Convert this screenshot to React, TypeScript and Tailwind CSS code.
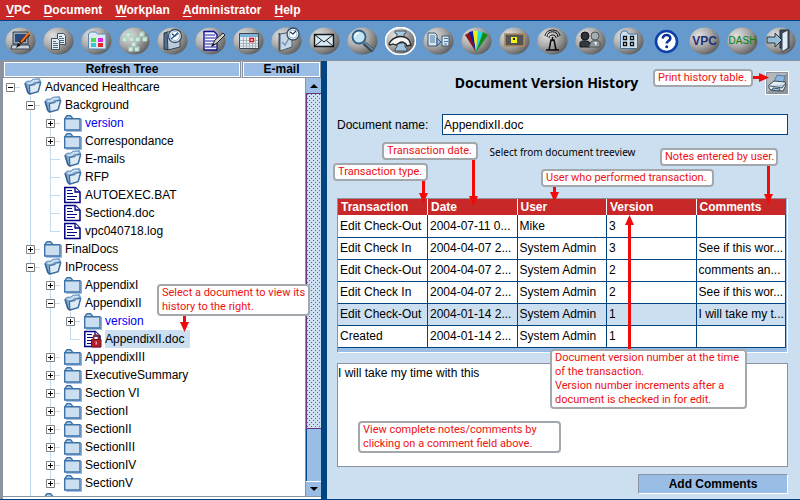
import clsx from 'clsx'
import type { ReactNode } from 'react'

const menus = ['VPC', 'Document', 'Workplan', 'Administrator', 'Help']

type NodeKind = 'open' | 'closed' | 'doc' | 'locked'

type TreeNode = {
  label: string
  depth: number
  kind: NodeKind
  toggle?: 'plus' | 'minus'
  last?: boolean
  link?: boolean
  selected?: boolean
}

const nodes: TreeNode[] = [
  { label: 'Advanced Healthcare', depth: 0, kind: 'open', toggle: 'minus' },
  { label: 'Background', depth: 1, kind: 'open', toggle: 'minus' },
  { label: 'version', depth: 2, kind: 'closed', toggle: 'plus', link: true },
  { label: 'Correspondance', depth: 2, kind: 'closed', toggle: 'plus' },
  { label: 'E-mails', depth: 2, kind: 'open' },
  { label: 'RFP', depth: 2, kind: 'open' },
  { label: 'AUTOEXEC.BAT', depth: 2, kind: 'doc' },
  { label: 'Section4.doc', depth: 2, kind: 'doc' },
  { label: 'vpc040718.log', depth: 2, kind: 'doc', last: true },
  { label: 'FinalDocs', depth: 1, kind: 'closed', toggle: 'plus' },
  { label: 'InProcess', depth: 1, kind: 'open', toggle: 'minus' },
  { label: 'AppendixI', depth: 2, kind: 'closed', toggle: 'plus' },
  { label: 'AppendixII', depth: 2, kind: 'open', toggle: 'minus' },
  { label: 'version', depth: 3, kind: 'closed', toggle: 'plus', link: true },
  { label: 'AppendixII.doc', depth: 3, kind: 'locked', last: true, selected: true },
  { label: 'AppendixIII', depth: 2, kind: 'closed', toggle: 'plus' },
  { label: 'ExecutiveSummary', depth: 2, kind: 'closed', toggle: 'plus' },
  { label: 'Section VI', depth: 2, kind: 'closed', toggle: 'plus' },
  { label: 'SectionI', depth: 2, kind: 'closed', toggle: 'plus' },
  { label: 'SectionII', depth: 2, kind: 'closed', toggle: 'plus' },
  { label: 'SectionIII', depth: 2, kind: 'closed', toggle: 'plus' },
  { label: 'SectionIV', depth: 2, kind: 'closed', toggle: 'plus' },
  { label: 'SectionV', depth: 2, kind: 'closed', toggle: 'plus', last: true },
]

const columns = ['Transaction', 'Date', 'User', 'Version', 'Comments']

const history = [
  ['Edit Check-Out', '2004-07-11 0...', 'Mike', '3', ''],
  ['Edit Check In', '2004-04-07 2...', 'System Admin', '3', 'See if this wor...'],
  ['Edit Check-Out', '2004-04-07 2...', 'System Admin', '2', 'comments an...'],
  ['Edit Check In', '2004-04-07 2...', 'System Admin', '2', 'See if this wor...'],
  ['Edit Check-Out', '2004-01-14 2...', 'System Admin', '1', 'I will take my t...'],
  ['Created', '2004-01-14 2...', 'System Admin', '1', ''],
]

const NodeIcon = ({ kind }: { kind: NodeKind }) => {
  if (kind === 'closed')
    return (
      <svg width="18" height="18" className="mx-[3px] shrink-0" aria-hidden="true">
        <path d="M2 17h15.3V5" fill="none" stroke="#86aee0" strokeWidth="1.4" />
        <path d="M1.5 5V3.5L3 1.7h3.5L8.5 4v1" fill="#b4d2ee" stroke="#3f73a8" strokeWidth="1.4" />
        <path d="M.7 4.7H16V16H.7z" fill="#cbdff0" stroke="#3f73a8" strokeWidth="1.4" />
      </svg>
    )
  if (kind === 'open')
    return (
      <svg width="18" height="18" className="mx-[3px] shrink-0" aria-hidden="true">
        <path d="M5.5 16.5l-2-1.5L.7 5.5l2-2.3 4-.2L9 1.2l6.5-.5.8 2.3.7 1.5-2.5 9.5z" fill="#7fa6ce" stroke="#6d98c7" />
        <path d="M3.5 5.2l4-.4 2.3-1.9 4.7-.3" fill="none" stroke="#d4e6f4" strokeWidth="1.8" />
        <path d="M1.2 5.5l2.8 9 2 1.7" fill="none" stroke="#2d5f93" strokeWidth="1.3" />
        <path d="M5.5 7.5l5-.8 2-1.7 4-.5-2.5 9-8 2.3z" fill="#dceaf5" stroke="#2d5f93" />
      </svg>
    )
  return (
    <svg width="18" height="18" className="mx-[3px] shrink-0" aria-hidden="true">
      <path d="M.8 1.5h10.5L16 6v10.5H.8z" fill="#fff" stroke="#000080" strokeWidth="1.5" />
      <path d="M11 1.5V6h5" fill="#dfe6f5" stroke="#000080" strokeWidth="1.3" />
      <path d="M3 4.5h5M3 7.5h6M3 10.5h10M3 13.5h8" stroke="#000080" />
      {kind === 'locked' && (
        <>
          <path d="M9.5 10V7.6c0-3.4 5-3.4 5 0V10" fill="none" stroke="#8a2430" strokeWidth="1.8" />
          <path d="M7.5 9.5H17V17H7.5z" fill="#b51f2b" stroke="#701018" />
          <path d="M11.5 11.5H13v3h-1.5z" fill="#e9a0a0" />
        </>
      )}
    </svg>
  )
}

const Branch = ({ node }: { node: TreeNode }) => (
  <svg
    className="shrink-0"
    width={node.depth ? 20 : 18}
    height="18"
    viewBox={node.depth ? '0 0 20 18' : '2 0 18 18'}
    aria-hidden="true"
  >
    {node.depth > 0 && <path d={node.last ? 'M9.5 0v10' : 'M9.5 0v18'} stroke="#c3dcf0" />}
    <path d="M9.5 9.5H19" stroke="#c3dcf0" />
    {node.toggle && (
      <>
        <path d="M5.5 5.5h8v8h-8z" fill="#fff" stroke="#808080" />
        <path d="M7 9.5h5" stroke="#000" />
        {node.toggle === 'plus' && <path d="M9.5 7v5" stroke="#000" />}
      </>
    )}
  </svg>
)

const TreeRow = ({ node }: { node: TreeNode }) => (
  <li role="treeitem" aria-selected={!!node.selected} className="flex h-[18px] items-center">
    {node.depth > 0 && <span className="w-[18px] shrink-0" />}
    {Array.from({ length: Math.max(0, node.depth - 1) }, (_, i) => (
      <svg key={i} width="20" height="18" className="shrink-0" aria-hidden="true">
        <path d="M9.5 0v18" stroke="#c3dcf0" />
      </svg>
    ))}
    {node.toggle ? (
      <button type="button" aria-label={`Toggle ${node.label}`} className="shrink-0">
        <Branch node={node} />
      </button>
    ) : (
      <Branch node={node} />
    )}
    <NodeIcon kind={node.kind} />
    <span
      className={clsx(
        'h-[18px] whitespace-nowrap leading-[18px]',
        node.link && 'text-[#0000f0]',
        node.selected && 'bg-[#cbdff0] pr-1.5',
      )}
    >
      {node.label}
    </span>
  </li>
)

const Sheet = ({ x, y }: { x: number; y: number }) => (
  <g transform={`translate(${x} ${y})`}>
    <path d="M.5.5h6l2 2v9h-8z" fill="#e3edf5" stroke="#41515f" />
    <path d="M2 3.5h3M2 5.5h5M2 7.5h5M2 9.5h5" stroke="#50687c" />
  </g>
)

const Clock = ({ x, y, r }: { x: number; y: number; r: number }) => (
  <g>
    <circle cx={x} cy={y} r={r} fill="#e8f3fc" stroke="#3d4c5c" strokeWidth="1.3" />
    <circle cx={x} cy={y} r={r - 2} fill="#fff" stroke="#7fb0dc" strokeWidth=".8" />
    <path d={`M${x - 3} ${y - 2}L${x} ${y}l3-3`} fill="none" stroke="#26333f" strokeWidth="1.2" />
  </g>
)

const cubes = [[10, 7], [23, 7], [6, 12], [13, 12], [19, 12], [26, 12], [15, 17], [12, 22], [18, 22]]

const tools: { name: string; sphere?: 'white' | 'none'; art?: ReactNode; text?: string }[] = [
  {
    name: 'Workstation',
    art: (
      <>
        <path d="M8 5h15v12H8z" fill="#9caab8" stroke="#2f3b4a" />
        <path d="M10 7h11v8H10z" fill="#29487c" />
        <path d="M7 18h17l1 4H6z" fill="#c9d0d8" stroke="#3c4652" />
        <path d="M15 16l9-9" stroke="#4b1a00" strokeWidth="3.6" />
        <path d="M16 15l8-9" stroke="#f07818" strokeWidth="2" />
        <path d="M11 21l2-5 3 2z" fill="#111" />
      </>
    ),
  },
  { name: 'Copy', art: <><Sheet x={14} y={6} /><Sheet x={8} y={11} /></> },
  {
    name: 'Project folder',
    art: (
      <>
        <path d="M7.5 22V7l2-2h5l2 2h8.5v15z" fill="#dbe9f5" stroke="#5b86b0" />
        <path d="M10 11h5v4h-5z" fill="#4ade4a" />
        <path d="M17 11h5v4h-5z" fill="#e020e0" />
        <path d="M10 16h5v4h-5z" fill="#35c8d0" />
        <path d="M17 16h5v4h-5z" fill="#e02828" />
      </>
    ),
  },
  {
    name: 'Organisation',
    art: cubes.map(([x, y]) => (
      <g key={`${x}-${y}`}>
        <path d={`M${x - 2.5} ${y - 1.5}l1-1h4v4l-1 1h-4z`} fill="#a9d4c4" />
        <path d={`M${x - 2} ${y - 1}h3v3h-3z`} fill="#cfeadd" />
      </g>
    )),
  },
  {
    name: 'Schedule',
    art: (
      <>
        <path d="M7 6l4-1v18l-4-1z" fill="#54708f" stroke="#27313d" />
        <path d="M10 5l13-1v16l-12 3z" fill="#b9cbdd" stroke="#36424f" />
        <Clock x={18} y={9} r={6.5} />
        <path d="M14 12l7-6" stroke="#285e96" strokeWidth="1.6" />
      </>
    ),
  },
  {
    name: 'Edit document',
    art: (
      <>
        <path d="M9 4.5h10l3 3V23H9z" fill="#f3f5ff" stroke="#101090" strokeWidth="1.4" />
        <path d="M10 8h10M10 11h11M10 14h11M10 17h11M10 20h11" stroke="#2020a0" strokeWidth="1.2" />
        <path d="M17 19l3-6 8-7 2 2-8 8z" fill="#cfcfcf" stroke="#222" />
        <path d="M16 20l2-4 2 2z" fill="#111" />
      </>
    ),
  },
  {
    name: 'Calendar',
    art: (
      <>
        <path d="M6.5 6.5h19v15h-19z" fill="#e5edf2" stroke="#3c4650" />
        <path d="M7 7h18v3H7z" fill="#7bb4d8" />
        <path d="M10.5 10v11M13.5 10v11M16.5 10v11M19.5 10v11M22.5 10v11M7 13.5h18M7 16.5h18M7 19h18" stroke="#a9b5bd" />
        <path d="M17 11.5h3.5v3H17z" fill="#fff" stroke="#e01818" strokeWidth="1.4" />
      </>
    ),
  },
  {
    name: 'Timed task',
    art: (
      <>
        <path d="M9 7l12-2v15L9 24z" fill="#c6d6e4" stroke="#4b5a68" />
        <path d="M9 7L8 6v16l1 2" fill="#4c6783" stroke="#3c4a57" />
        <path d="M11 15l3 3 4-7" fill="none" stroke="#7593b0" strokeWidth="1.4" />
        <Clock x={22} y={7} r={6} />
      </>
    ),
  },
  {
    name: 'Mail',
    art: (
      <>
        <path d="M5.5 7.5h19v12h-19z" fill="#dbe9f3" stroke="#10161c" strokeWidth="1.4" />
        <path d="M5.5 7.5L15 15l9.5-7.5M5.5 19.5l7-6M24.5 19.5l-7-6" fill="none" stroke="#10161c" />
      </>
    ),
  },
  {
    name: 'Search',
    art: (
      <>
        <path d="M17 16l9 8" stroke="#384450" strokeWidth="4" />
        <path d="M17 15l9 8" stroke="#7297ac" strokeWidth="1.5" />
        <circle cx="12" cy="10" r="6.5" fill="#c5e4f4" stroke="#2b5f88" strokeWidth="1.8" />
        <path d="M8 10c0-3 2-4 4-4" fill="none" stroke="#fff" strokeWidth="1.5" />
      </>
    ),
  },
  {
    name: 'History',
    sphere: 'white',
    art: (
      <>
        <path d="M10 4h11v2l-2 1v4l-3 3-4-3V7l-2-1z" fill="#a9cbe2" stroke="#40505f" />
        <path d="M10 24h12v-2l-2-2v-4h-8v4l-2 2z" fill="#9fc2da" stroke="#40505f" />
        <path d="M4 17C8 9 18 7 24 13l2 5-4 1c-1-4-5-5-8-3l-3 2-3-1-3 1z" fill="#f5f5f5" stroke="#222" strokeWidth="1.3" />
      </>
    ),
  },
  {
    name: 'Transfer',
    art: (
      <>
        <path d="M5 6h7l2 2v11H5z" fill="#d7e6f3" stroke="#3d546b" />
        <path d="M7 9h5M7 11h5M7 13h5M7 15h5" stroke="#4c789f" />
        <path d="M19 9h7v10h-7z" fill="#d7e6f3" stroke="#3d546b" />
        <path d="M21 11.5h4M21 14.5h4M21 17h3" stroke="#4c789f" />
        <path d="M14 11l4 4-4 4z" fill="#8db7dc" stroke="#355b80" />
      </>
    ),
  },
  {
    name: 'Colours',
    art: (
      <>
        <path d="M15 25L4 8l5-3z" fill="#8c1020" />
        <path d="M15 25L8 5l4-1z" fill="#101ca0" />
        <path d="M15 25L12 4h5z" fill="#f0e818" />
        <path d="M15 25l2-21 5 1z" fill="#20d8e0" />
        <path d="M15 25l7-20 5 3z" fill="#0c9018" />
      </>
    ),
  },
  {
    name: 'Notice board',
    art: (
      <>
        <path d="M6 7h19v12H6z" fill="#535353" stroke="#b08a5e" strokeWidth="1.5" />
        <path d="M12 10h6v6h-6z" fill="#f4f410" />
        <path d="M14 11h2v2h-2z" fill="#222" />
      </>
    ),
  },
  {
    name: 'Broadcast',
    art: (
      <g fill="none" stroke="#0b0b0b">
        <path d="M15.5 10v4M14 13h3l2 10h-7zM9 23h4M18 23h4" strokeWidth="1.5" />
        <path d="M12 11c0-4 7-4 7 0M10 10c0-7 11-7 11 0M8 9C9 1 22 1 23 9" />
      </g>
    ),
  },
  {
    name: 'Users',
    art: (
      <>
        <circle cx="10" cy="9" r="4" fill="#2e3338" stroke="#111" />
        <path d="M5 20v-4c0-3 9-3 10 0v4z" fill="#33393f" stroke="#16191c" />
        <circle cx="20" cy="9" r="4" fill="#a5adb3" stroke="#4d545a" />
        <path d="M14 20l2-5c2-2 7-2 9 0v5z" fill="#8f989f" stroke="#4d545a" />
        <path d="M19 15l2 4 1-4z" fill="#eee" />
      </>
    ),
  },
  {
    name: 'Categories',
    art: (
      <>
        <path d="M7.5 21.5V7l2-3h4l2 3h9v14.5z" fill="#cde0f0" stroke="#47709b" />
        <path d="M10.5 9.5h3v3h-3zM17.5 9.5h3v3h-3zM10.5 15.5h3v3h-3zM17.5 15.5h3v3h-3z" fill="#fff" stroke="#111" strokeWidth="1.3" />
      </>
    ),
  },
  {
    name: 'Help',
    sphere: 'none',
    art: (
      <>
        <circle cx="15.5" cy="14.5" r="10.5" fill="#fff" stroke="#0b41a8" strokeWidth="2.6" />
        <path d="M11.8 11.5c0-5 8-4.5 7.5 0-.3 2.5-3.6 2.5-3.6 5" fill="none" stroke="#0b2f9a" strokeWidth="2.6" />
        <circle cx="15.7" cy="19.7" r="1.5" fill="#0b2f9a" />
      </>
    ),
  },
  { name: 'VPC', text: 'VPC' },
  { name: 'Dashboard', text: 'DASH' },
  {
    name: 'Exit',
    art: (
      <>
        <path d="M15 3h9v18h-9z" fill="#3a4b5b" stroke="#26313b" />
        <path d="M17 6l6-3v18l-6 4z" fill="#e1edf6" stroke="#36434f" />
        <path d="M2 10h8V6l7 7-7 7v-4H2z" fill="#98bbd6" stroke="#283643" />
      </>
    ),
  },
]

const Toolbar = () => (
  <div role="toolbar" className="flex h-10 shrink-0 items-center gap-[7px] border-b border-[#8c93a0] bg-[#6699cc] pl-[5px]">
    <svg width="0" height="0" className="absolute" aria-hidden="true">
      <radialGradient id="sphere" cx=".3" cy=".3" r=".8">
        <stop offset="0" stopColor="#e0e0e0" />
        <stop offset=".5" stopColor="#aaaaaa" />
        <stop offset="1" stopColor="#5a5a5a" />
      </radialGradient>
    </svg>
    {tools.map(({ name, sphere, art, text }) => (
      <button key={name} type="button" aria-label={name} className="grid h-7 w-[31px] shrink-0 place-items-center">
        <svg width="31" height="28" className="[grid-area:1/1]" aria-hidden="true">
          {sphere !== 'none' && (
            <ellipse
              cx="15.5"
              cy="14"
              rx="15"
              ry="13.5"
              fill="url(#sphere)"
              stroke={sphere === 'white' ? '#fff' : 'none'}
              strokeWidth="1.8"
            />
          )}
          {art}
        </svg>
        {text && (
          <span
            className={clsx(
              'whitespace-nowrap [grid-area:1/1]',
              text === 'VPC' ? 'text-[12px] font-bold text-[#1c2f7c]' : 'text-[10px] text-[#08800c]',
            )}
          >
            {text}
          </span>
        )}
      </button>
    ))}
  </div>
)

const Scrollbar = () => (
  <div className="flex w-4 shrink-0 flex-col border-l border-[#8c93a0] bg-[#9abde6]">
    <button type="button" aria-label="Scroll up" className="grid h-[15px] place-items-center">
      <svg width="8" height="4"><path d="M0 4l4-4 4 4z" /></svg>
    </button>
    <svg className="min-h-0 w-full flex-[350] border-y border-l border-[#663380] bg-[#cbdff0]" aria-hidden="true">
      <defs>
        <pattern id="grip" width="4" height="4" patternUnits="userSpaceOnUse">
          <path d="M0 0h1v1H0zM2 2h1v1H2z" fill="#6a5c9c" />
        </pattern>
      </defs>
      <rect width="100%" height="100%" fill="url(#grip)" />
    </svg>
    <div className="flex-[54] border-l border-[#004482]" />
    <button type="button" aria-label="Scroll down" className="grid h-[15px] place-items-center border-t border-white">
      <svg width="8" height="4"><path d="M0 0h8L4 4z" /></svg>
    </button>
  </div>
)

const Callout = ({ className, children }: { className: string; children: ReactNode }) => (
  <div
    className={clsx(
      'absolute whitespace-nowrap rounded-sm border-2 border-[#a3a8ad] bg-white pl-[3px] font-[Roboto,sans-serif] text-[11px] leading-[14px] text-[#ee1111]',
      className,
    )}
  >
    {children}
  </div>
)

const Arrow = ({ className, length, turn = 'down' }: { className: string; length: number; turn?: 'down' | 'up' | 'right' }) => {
  const wide = turn === 'right'
  const shaft = {
    down: `M4.5 0V${length - 8}`,
    up: `M4.5 ${length}V8`,
    right: `M0 4.5H${length - 8}`,
  }[turn]
  const head = {
    down: `M0 ${length - 10}h9L4.5 ${length}z`,
    up: 'M0 10h9L4.5 0z',
    right: `M${length - 10} 0v9L${length} 4.5z`,
  }[turn]
  return (
    <svg className={clsx('absolute', className)} width={wide ? length : 9} height={wide ? 9 : length} aria-hidden="true">
      <path d={shaft} stroke="#f00a0a" strokeWidth="3" />
      <path d={head} fill="#f00a0a" />
    </svg>
  )
}

const headerButton =
  'h-[15px] border border-white bg-[#9abde6] leading-[13px] font-bold outline outline-[#8c93a0]'

const DocumentTree = () => (
  <aside className="flex w-[321px] shrink-0 flex-col border-l-[3px] border-[#8c93a0] bg-[#cbdff0]">
    <div className="flex gap-[3px] p-px">
      <button type="button" className={clsx(headerButton, 'flex-1')}>Refresh Tree</button>
      <button type="button" className={clsx(headerButton, 'w-[77px]')}>E-mail</button>
    </div>
    <div className="flex min-h-0 flex-1 border-b border-[#8c93a0] bg-white">
      <ul role="tree" className="min-w-0 flex-1 overflow-hidden">
        {nodes.map((node, i) => (
          <TreeRow key={i} node={node} />
        ))}
        <li className="flex h-[18px] pl-[18px]" aria-hidden="true">
          <Branch node={{ label: '', depth: 1, kind: 'closed' }} />
          <NodeIcon kind="closed" />
        </li>
      </ul>
      <Scrollbar />
    </div>
    <div className="h-0.5 bg-white" />
  </aside>
)

const VersionHistory = () => (
  <main className="flex min-w-0 flex-1 flex-col bg-[#cbdff0] pt-2.5 pr-3 pb-[5px] pl-2.5">
    <div className="flex h-6 items-center">
      <h1 className="flex-1 pr-2.5 text-center font-['Noto_Sans',sans-serif] text-[14px] leading-6 font-bold">
        Document Version History
      </h1>
      <button type="button" aria-label="Print history table" className="border border-[#8c93a0] bg-[#b3b8bd] outline outline-white">
        <svg width="20" height="20" aria-hidden="true">
          <path d="M0 20L20 0v20z" fill="#8f969d" />
          <path d="M7 9l3-7 8 1-2 8z" fill="#88b4de" stroke="#5d7c9b" />
          <path d="M2 12l5-4 11 1 1 3-3 6-12-1-2-2z" fill="#e3edf4" stroke="#3c4955" />
          <path d="M3 13l12 2 3-4M6 15l7 1-1 2-7-1z" fill="#b1c7da" stroke="#405468" />
        </svg>
      </button>
    </div>

    <div className="mt-[19px] flex items-center">
      <label htmlFor="document-name" className="w-[105px] shrink-0">Document name:</label>
      <input
        id="document-name"
        defaultValue="AppendixII.doc"
        className="h-[21px] min-w-0 flex-1 border border-[#004482] bg-white pl-px"
      />
    </div>

    <p className="mt-[9px] text-center font-['Noto_Sans',sans-serif] text-[10px] leading-4">
      Select from document treeview
    </p>

    <div className="mt-[38px] border border-[#8c93a0] border-r-white border-b-white bg-[#9abde6] pr-px pb-1">
      <table className="w-full table-fixed border-collapse bg-white">
        <thead>
          <tr className="h-4 bg-[#c82828] text-white">
            {columns.map((column) => (
              <th key={column} scope="col" className="border-r border-white pl-[3px] text-left leading-4 font-bold last:border-r-0">
                {column}
              </th>
            ))}
          </tr>
        </thead>
        <tbody>
          {history.map((row, i) => (
            <tr key={i} className={clsx('h-[22px]', i === 4 && 'bg-[#cbdff0]')}>
              {row.map((cell, j) => (
                <td key={j} className="h-[22px] overflow-hidden border-r border-b border-[#004482] pl-0.5 leading-5 whitespace-nowrap">
                  {cell}
                </td>
              ))}
            </tr>
          ))}
        </tbody>
      </table>
    </div>

    <textarea
      aria-label="Comments"
      defaultValue="I will take my time with this"
      className="mt-2.5 min-h-0 flex-1 resize-none border border-[#8c93a0] bg-white leading-[18px]"
    />
    <button
      type="button"
      className="mt-[7px] h-5 w-[150px] shrink-0 self-end border border-[#8c93a0] border-r-white border-b-white bg-[#9abde6] leading-[18px] font-bold"
    >
      Add Comments
    </button>
  </main>
)

const App = () => {
  return (
    <div className="relative flex h-screen flex-col overflow-hidden border-b border-[#004482] bg-white font-['Liberation_Sans',Arial,sans-serif] text-[12px] text-black">
      <nav className="flex h-[21px] shrink-0 items-center gap-[13px] border-b border-[#004482] bg-[#c82828] pl-1.5 font-bold text-white">
        {menus.map((menu) => (
          <button key={menu} type="button">
            <span className="underline underline-offset-2">{menu[0]}</span>
            {menu.slice(1)}
          </button>
        ))}
      </nav>
      <Toolbar />
      <div className="flex min-h-0 flex-1">
        <DocumentTree />
        <div className="w-1.5 shrink-0 bg-[#004482]" />
        <VersionHistory />
      </div>

      <Arrow className="top-[73px] left-[751px]" length={18} turn="right" />
      <Callout className="top-[69px] left-[653px] w-[100px]">Print history table.</Callout>
      <Arrow className="top-[158px] left-[469px]" length={48} />
      <Callout className="top-[142px] left-[382px] w-[96px]">Transaction date.</Callout>
      <Arrow className="top-[180px] left-[419px]" length={23} />
      <Callout className="top-[163px] left-[333px] w-[95px]">Transaction type.</Callout>
      <Arrow className="top-[185px] left-[550px]" length={17} />
      <Callout className="top-[169px] left-[541px] w-[173px]">User who performed transaction.</Callout>
      <Arrow className="top-[164px] left-[764px]" length={40} />
      <Callout className="top-[148px] left-[660px] w-[118px]">Notes entered by user.</Callout>
      <Arrow className="top-[314px] left-[180px]" length={18} />
      <Callout className="top-[284px] left-[157px] w-[153px]">
        Select a document to view its
        <br />
        history to the right.
      </Callout>
      <Arrow className="top-[215px] left-[625px]" length={135} turn="up" />
      <Callout className="top-[349px] left-[550px] w-[197px]">
        Document version number at the time
        <br />
        of the transaction.
        <br />
        Version number increments after a
        <br />
        document is checked in for edit.
      </Callout>
      <Callout className="top-[421px] left-[358px] w-[203px]">
        View complete notes/comments by
        <br />
        clicking on a comment field above.
      </Callout>
    </div>
  )
}

export default App
